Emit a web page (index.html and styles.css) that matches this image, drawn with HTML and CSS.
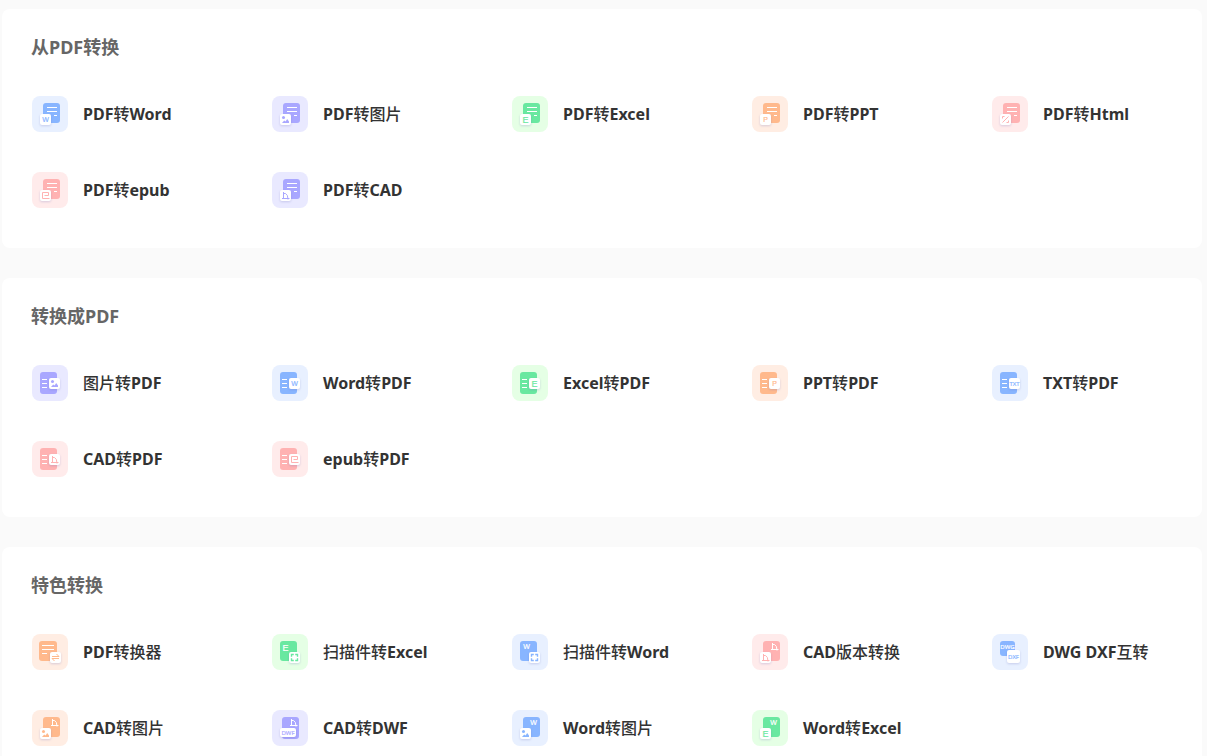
FILE: index.html
```
<!DOCTYPE html>
<html lang="zh-CN">
<head>
    <meta charset="UTF-8">
    <meta name="viewport" content="width=device-width, initial-scale=1.0">
    <title>PDF转换</title>
    <link rel="stylesheet" href="styles.css">
</head>
<body>

    <!-- Shared icon parts -->
    <svg class="sprite" aria-hidden="true">
        <symbol id="doc-from" viewBox="0 0 36 36">
            <rect x="11" y="7" width="17" height="20" rx="3" fill="currentColor"/>
            <path d="M15 11.5h10M15 15.5h10M22 19.5h3" stroke="#fff"/>
        </symbol>
        <symbol id="doc-to" viewBox="0 0 36 36">
            <rect x="8" y="7" width="17" height="22" rx="3" fill="currentColor"/>
            <path d="M10 14.5h5M10 18.5h5M10 22.5h5" stroke="#fff"/>
        </symbol>
        <symbol id="doc-right" viewBox="0 0 36 36">
            <rect x="11" y="7" width="17" height="20" rx="3" fill="currentColor"/>
        </symbol>
        <symbol id="doc-left" viewBox="0 0 36 36">
            <rect x="8" y="7" width="17" height="20" rx="3" fill="currentColor"/>
        </symbol>
        <!-- 11x11 glyphs -->
        <symbol id="g-image" viewBox="0 0 11 11">
            <circle cx="3.5" cy="3.5" r="1.5" fill="currentColor"/>
            <path d="M2 9l2.2-2.6 1.4 1.1L7.2 5 9 7.4V9z" fill="currentColor"/>
        </symbol>
        <symbol id="g-cad" viewBox="0 0 11 11">
            <path d="M3.5 2v6.5M2 8.5h7.5M3.5 3.5h2Q8 4.5 8 9.5" fill="none" stroke="currentColor"/>
        </symbol>
        <symbol id="g-epub" viewBox="0 0 11 11">
            <path d="M4.5 5.5h4v-3h-6v6h7" fill="none" stroke="currentColor"/>
        </symbol>
        <symbol id="g-html" viewBox="0 0 11 11">
            <path d="M2.5 4.5v-2h2M8.5 6.5v2h-2M8.5 2.5l-6 6" fill="none" stroke="currentColor"/>
        </symbol>
        <symbol id="g-scan" viewBox="0 0 11 11">
            <path d="M2.5 4.8V2.5h2.3M6.200 2.500h2.300v2.300M8.500 6.200v2.300H6.200M4.800 8.500H2.500V6.200" fill="none" stroke="currentColor" stroke-width="1.4"/>
        </symbol>
        <symbol id="g-swap" viewBox="0 0 11 11">
            <path d="M2 4.5h7L6.5 2M9 6.5H2L4.5 9" fill="none" stroke="currentColor"/>
        </symbol>
    </svg>

    <main class="page">
        <section class="card">
            <h2>从PDF转换</h2>
            <ul class="tools">
                <li><a href="#"><svg class="icon blue" viewBox="0 0 36 36"><use href="#doc-from"/><rect class="badge" x="8" y="18" width="11" height="11" rx="2"/><text x="13.5" y="26">W</text></svg><span><b>PDF</b>转<b>Word</b></span></a></li>
                <li><a href="#"><svg class="icon purple" viewBox="0 0 36 36"><use href="#doc-from"/><rect class="badge" x="8" y="18" width="11" height="11" rx="2"/><use href="#g-image" x="8" y="18" width="11" height="11"/></svg><span><b>PDF</b>转图片</span></a></li>
                <li><a href="#"><svg class="icon green" viewBox="0 0 36 36"><use href="#doc-from"/><rect class="badge" x="8" y="18" width="11" height="11" rx="2"/><text x="13.5" y="27" class="tall">E</text></svg><span><b>PDF</b>转<b>Excel</b></span></a></li>
                <li><a href="#"><svg class="icon orange" viewBox="0 0 36 36"><use href="#doc-from"/><rect class="badge" x="8" y="18" width="11" height="11" rx="2"/><text x="13.5" y="26">P</text></svg><span><b>PDF</b>转<b>PPT</b></span></a></li>
                <li><a href="#"><svg class="icon pink" viewBox="0 0 36 36"><use href="#doc-from"/><rect class="badge" x="8" y="18" width="11" height="11" rx="2"/><use href="#g-html" x="8" y="18" width="11" height="11"/></svg><span><b>PDF</b>转<b>Html</b></span></a></li>
                <li><a href="#"><svg class="icon pink" viewBox="0 0 36 36"><use href="#doc-from"/><rect class="badge" x="8" y="18" width="11" height="11" rx="2"/><use href="#g-epub" x="8" y="18" width="11" height="11"/></svg><span><b>PDF</b>转<b>epub</b></span></a></li>
                <li><a href="#"><svg class="icon purple" viewBox="0 0 36 36"><use href="#doc-from"/><rect class="badge" x="8" y="18" width="11" height="11" rx="2"/><use href="#g-cad" x="8" y="18" width="11" height="11"/></svg><span><b>PDF</b>转<b>CAD</b></span></a></li>
            </ul>
        </section>

        <section class="card">
            <h2>转换成PDF</h2>
            <ul class="tools">
                <li><a href="#"><svg class="icon purple" viewBox="0 0 36 36"><use href="#doc-to"/><rect class="badge" x="17" y="13" width="11" height="11" rx="2"/><use href="#g-image" x="17" y="13" width="11" height="11"/></svg><span>图片转<b>PDF</b></span></a></li>
                <li><a href="#"><svg class="icon blue" viewBox="0 0 36 36"><use href="#doc-to"/><rect class="badge" x="17" y="13" width="11" height="11" rx="2"/><text x="22.5" y="21">W</text></svg><span><b>Word</b>转<b>PDF</b></span></a></li>
                <li><a href="#"><svg class="icon green" viewBox="0 0 36 36"><use href="#doc-to"/><rect class="badge" x="17" y="13" width="11" height="11" rx="2"/><text x="22.5" y="22" class="tall">E</text></svg><span><b>Excel</b>转<b>PDF</b></span></a></li>
                <li><a href="#"><svg class="icon orange" viewBox="0 0 36 36"><use href="#doc-to"/><rect class="badge" x="17" y="13" width="11" height="11" rx="2"/><text x="22.5" y="21">P</text></svg><span><b>PPT</b>转<b>PDF</b></span></a></li>
                <li><a href="#"><svg class="icon blue" viewBox="0 0 36 36"><use href="#doc-to"/><rect class="badge" x="17" y="13" width="11" height="11" rx="2"/><text x="22.5" y="21" class="small">TXT</text></svg><span><b>TXT</b>转<b>PDF</b></span></a></li>
                <li><a href="#"><svg class="icon pink" viewBox="0 0 36 36"><use href="#doc-to"/><rect class="badge" x="17" y="13" width="11" height="11" rx="2"/><use href="#g-cad" x="17" y="13" width="11" height="11"/></svg><span><b>CAD</b>转<b>PDF</b></span></a></li>
                <li><a href="#"><svg class="icon pink" viewBox="0 0 36 36"><use href="#doc-to"/><rect class="badge" x="17" y="13" width="11" height="11" rx="2"/><use href="#g-epub" x="17" y="13" width="11" height="11"/></svg><span><b>epub</b>转<b>PDF</b></span></a></li>
            </ul>
        </section>

        <section class="card">
            <h2>特色转换</h2>
            <ul class="tools">
                <li><a href="#"><svg class="icon orange" viewBox="0 0 36 36"><rect x="7" y="7" width="18" height="20" rx="3" fill="currentColor"/><path d="M10 11.5h12M10 15.5h12M10 19.5h5" stroke="#fff"/><rect class="badge" x="18" y="18" width="11" height="11" rx="2"/><use href="#g-swap" x="18" y="18" width="11" height="11"/></svg><span><b>PDF</b>转换器</span></a></li>
                <li><a href="#"><svg class="icon green" viewBox="0 0 36 36"><use href="#doc-left"/><text x="13.5" y="17" class="tall white">E</text><rect class="badge" x="17" y="18" width="11" height="11" rx="2"/><use href="#g-scan" x="17" y="18" width="11" height="11"/></svg><span>扫描件转<b>Excel</b></span></a></li>
                <li><a href="#"><svg class="icon blue" viewBox="0 0 36 36"><use href="#doc-left"/><text x="14.5" y="15" class="white">W</text><rect class="badge" x="17" y="18" width="11" height="11" rx="2"/><use href="#g-scan" x="17" y="18" width="11" height="11"/></svg><span>扫描件转<b>Word</b></span></a></li>
                <li><a href="#"><svg class="icon pink" viewBox="0 0 36 36"><use href="#doc-right"/><use class="white" href="#g-cad" x="17" y="7" width="11" height="11"/><rect class="badge" x="8" y="18" width="11" height="11" rx="2"/><use href="#g-cad" x="8" y="18" width="11" height="11"/></svg><span><b>CAD</b>版本转换</span></a></li>
                <li><a href="#"><svg class="icon blue" viewBox="0 0 36 36"><rect x="8" y="7" width="15" height="15" rx="3" fill="currentColor"/><text x="15.5" y="15" class="small white">DWG</text><rect class="badge" x="15" y="16" width="13" height="13" rx="2"/><text x="21.5" y="25" class="small">DXF</text></svg><span><b>DWG DXF</b>互转</span></a></li>
                <li><a href="#"><svg class="icon orange" viewBox="0 0 36 36"><use href="#doc-right"/><use class="white" href="#g-cad" x="17" y="7" width="11" height="11"/><rect class="badge" x="8" y="18" width="11" height="11" rx="2"/><use href="#g-image" x="8" y="18" width="11" height="11"/></svg><span><b>CAD</b>转图片</span></a></li>
                <li><a href="#"><svg class="icon purple" viewBox="0 0 36 36"><rect x="10" y="7" width="17" height="22" rx="3" fill="currentColor"/><use class="white" href="#g-cad" x="16" y="7" width="11" height="11"/><rect class="badge" x="8" y="18" width="16" height="9" rx="2"/><text x="16" y="25" class="small">DWF</text></svg><span><b>CAD</b>转<b>DWF</b></span></a></li>
                <li><a href="#"><svg class="icon blue" viewBox="0 0 36 36"><use href="#doc-right"/><text x="21.5" y="15" class="white">W</text><rect class="badge" x="8" y="18" width="11" height="11" rx="2"/><use href="#g-image" x="8" y="18" width="11" height="11"/></svg><span><b>Word</b>转图片</span></a></li>
                <li><a href="#"><svg class="icon green" viewBox="0 0 36 36"><use href="#doc-right"/><text x="21.5" y="15" class="white">W</text><rect class="badge" x="8" y="18" width="11" height="11" rx="2"/><text x="13.5" y="27" class="tall">E</text></svg><span><b>Word</b>转<b>Excel</b></span></a></li>
            </ul>
        </section>
    </main>

</body>
</html>
```
FILE: styles.css
```
* { margin: 0; padding: 0; box-sizing: border-box; }
body { background: #fafafa; color: #333; font-family: "Noto Sans", "Noto Sans CJK SC", sans-serif; }
a { color: inherit; text-decoration: none; }
ul { list-style: none; }

.sprite { display: none; }

.page { display: flex; flex-direction: column; gap: 30px; padding: 9px 5px 30px 2px; }

/* Cards */
.card { background: #fff; border-radius: 8px; padding: 24px 0 40px; }
.card h2 { padding-left: 29px; margin-bottom: 35px; font-size: 18px; line-height: 28px; font-weight: 700; color: #666; }

/* Tool links */
.tools { display: grid; grid-template-columns: repeat(5, 1fr); row-gap: 40px; }
.tools a { display: flex; align-items: center; gap: 15px; padding-left: 30px; font-size: 16px; line-height: 24px; font-weight: 500; white-space: nowrap; }
.tools b { font-weight: 700; }
.tools a:hover { color: #88b5ff; }

/* Icons */
.icon { flex: none; width: 36px; height: 36px; border-radius: 8px; }
.icon text { font-family: "Liberation Sans", sans-serif; font-size: 7px; text-anchor: middle; fill: currentColor; stroke: currentColor; stroke-width: 0.2; }
.icon .tall { font-size: 9px; }
.icon .small { font-family: "Open Sans", sans-serif; font-size: 6px; }
.icon .white { color: #fff; }
.badge { fill: #fff; filter: drop-shadow(0 1px 1px rgba(100, 100, 180, 0.25)); }

.blue { color: #88b5ff; background: #e8f0ff; }
.purple { color: #a9a7ff; background: #e9e9ff; }
.green { color: #69e8a0; background: #e5ffe5; }
.orange { color: #ffb98c; background: #ffede3; }
.pink { color: #ffb2b2; background: #ffebeb; }
```
